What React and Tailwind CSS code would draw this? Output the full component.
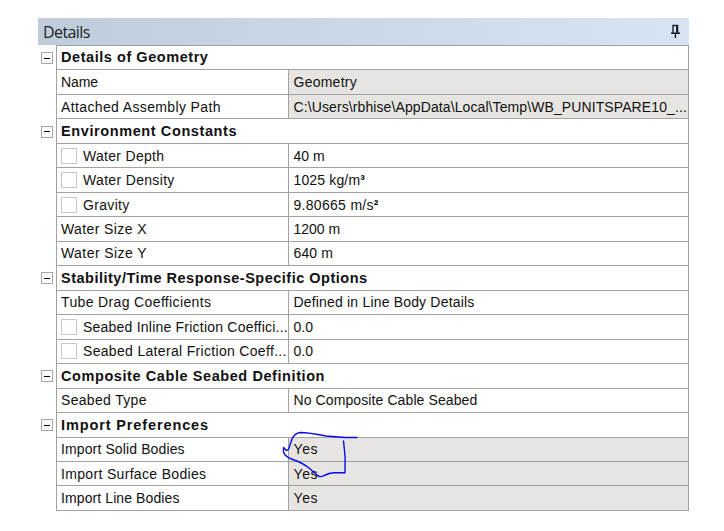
const rows = [
  { head: 'Details of Geometry', track: 'tracking-[0.55px]' },
  { label: 'Name', value: 'Geometry', locked: true, track: 'tracking-[-0.1px]', vtrack: 'tracking-[0.25px]' },
  {
    label: 'Attached Assembly Path',
    value: 'C:\\Users\\rbhise\\AppData\\Local\\Temp\\WB_PUNITSPARE10_...',
    locked: true,
    track: 'tracking-[0.37px]',
    vtrack: 'tracking-[0.1px]',
  },
  { head: 'Environment Constants', track: 'tracking-[0.6px]' },
  { label: 'Water Depth', value: '40 m', check: true, track: 'tracking-[0.3px]' },
  { label: 'Water Density', value: '1025 kg/m³', check: true, track: 'tracking-[0.33px]', vtrack: 'tracking-[0.15px]' },
  { label: 'Gravity', value: '9.80665 m/s²', check: true, track: 'tracking-[0.33px]', vtrack: 'tracking-[0.3px]' },
  { label: 'Water Size X', value: '1200 m', track: 'tracking-[0.4px]' },
  { label: 'Water Size Y', value: '640 m', track: 'tracking-[0.43px]', vtrack: 'tracking-[0.1px]' },
  { head: 'Stability/Time Response-Specific Options', track: 'tracking-[0.5px]' },
  { label: 'Tube Drag Coefficients', value: 'Defined in Line Body Details', track: 'tracking-[0.36px]', vtrack: 'tracking-[0.18px]' },
  { label: 'Seabed Inline Friction Coeffici...', value: '0.0', check: true, track: 'tracking-[0.22px]' },
  { label: 'Seabed Lateral Friction Coeff...', value: '0.0', check: true, track: 'tracking-[0.32px]' },
  { head: 'Composite Cable Seabed Definition', track: 'tracking-[0.58px]' },
  { label: 'Seabed Type', value: 'No Composite Cable Seabed', track: 'tracking-[0.32px]', vtrack: 'tracking-[0.1px]' },
  { head: 'Import Preferences', track: 'tracking-[0.88px]' },
  { label: 'Import Solid Bodies', value: 'Yes', locked: true, track: 'tracking-[0.12px]', vtrack: 'tracking-[0.6px]' },
  { label: 'Import Surface Bodies', value: 'Yes', locked: true, track: 'tracking-[0.33px]', vtrack: 'tracking-[0.6px]' },
  { label: 'Import Line Bodies', value: 'Yes', locked: true, track: 'tracking-[0.1px]', vtrack: 'tracking-[0.6px]' },
];

function Pin() {
  return (
    <svg width="11" height="15" viewBox="0 0 11 15" fill="none" stroke="#17202c" strokeWidth="1.4">
      <path d="M3 9V1.5h4.6V9M1 9.2h9M5.4 9.5V14" />
      <path d="M7 1.5V9" strokeWidth="2" />
    </svg>
  );
}

function Row({ row }) {
  return (
    <div className="flex h-[24.47px] w-[651px]">
      <div className="flex w-[18px] shrink-0 items-center pl-[3px]">
        {row.head && (
          <div className="flex size-3 items-center justify-center border border-[#a6a6a6] bg-white">
            <div className="h-px w-[6px] bg-black" />
          </div>
        )}
      </div>
      {row.head ? (
        <div className="flex grow items-center border-x border-b border-[#a2a2a2] pl-1 text-[14.5px] font-bold">
          <span className={row.track}>{row.head}</span>
        </div>
      ) : (
        <>
          <div className="flex w-[233px] shrink-0 items-center border-x border-b border-[#a2a2a2] pl-1">
            {row.check && <div className="mr-[6px] size-4 shrink-0 border border-[#c8c8c8]" />}
            <span className={row.track}>{row.label}</span>
          </div>
          <div
            className={
              'flex min-w-0 grow items-center border-r border-b border-[#a2a2a2] pl-[4.5px] ' +
              (row.locked ? 'bg-[#e7e5e1]' : 'bg-white')
            }
          >
            <span className={row.vtrack}>
              {row.value.replace(/[²³]$/, '')}
              <span className="font-bold">{row.value.match(/[²³]$/)}</span>
            </span>
          </div>
        </>
      )}
    </div>
  );
}

export default function App() {
  return (
    <div className="relative h-[531px] w-[724px] overflow-hidden bg-white pt-[18px] pl-[38px] font-['Liberation_Sans',Arial,sans-serif] text-[14px] leading-none whitespace-nowrap text-[#111]">
      <div className="flex h-[27px] w-[651px] items-center justify-between bg-linear-to-r from-[#bfcddb] to-[#d7e5f2] pr-[8px] pl-[5px]">
        <span className="pt-px font-['Open_Sans',sans-serif] text-[16px] tracking-[-0.6px] text-[#20242a]">Details</span>
        <Pin />
      </div>
      <div className="ml-[18px] h-px w-[633px] bg-[#a2a2a2]" />
      {rows.map((row, i) => (
        <Row key={i} row={row} />
      ))}
      <svg
        className="absolute top-[428px] left-[280px]"
        width="82"
        height="54"
        fill="none"
        stroke="#0808f0"
        strokeWidth="1.4"
        strokeLinecap="round"
        strokeLinejoin="round"
      >
        <path d="M77 9.5H65L46 8C36 6 28 4.500 20 4.500Q15 5 12 11L9 20Q8 23 6 22L3.500 19.500V24Q5 29 14 32Q21 34 29 40L37 47Q40 50 44 47.500Q49 45 54 44.700H65Q66 29 63.500 13" />
      </svg>
    </div>
  );
}
